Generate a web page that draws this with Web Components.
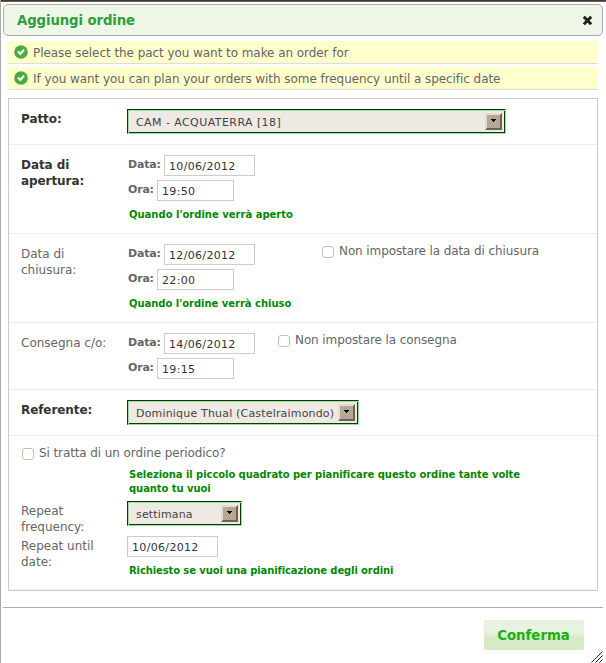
<!DOCTYPE html>
<html lang="it"><head><meta charset="utf-8"><title>Aggiungi ordine</title>
<style>html,body{margin:0;height:100%;overflow:hidden;background:#fff}body{font:12px/16px "DejaVu Sans",sans-serif;color:#666}</style>
</head><body>
<order-dialog>
<span slot="title">Aggiungi ordine</span>
<info-message>Please select the pact you want to make an order for</info-message>
<info-message>If you want you can plan your orders with some frequency until a specific date</info-message>
<form-panel>
<form-row label="Patto:" required style="height:46px"><select-box style="width:379px;margin-top:-2px;letter-spacing:.43px">CAM - ACQUATERRA [18]</select-box></form-row>
<form-row label="Data di apertura:" required style="height:89px"><date-time date="10/06/2012" time="19:50"></date-time><hint-text>Quando l'ordine verrà aperto</hint-text></form-row>
<form-row label="Data di chiusura:" style="height:89px"><date-time date="12/06/2012" time="22:00"><check-box style="margin-left:63px">Non impostare la data di chiusura</check-box></date-time><hint-text style="letter-spacing:-.03px">Quando l'ordine verrà chiuso</hint-text></form-row>
<form-row label="Consegna c/o:" style="height:67px"><date-time date="14/06/2012" time="19:15"><check-box style="margin-left:19px">Non impostare la consegna</check-box></date-time></form-row>
<form-row label="Referente:" required style="height:46px"><select-box style="width:232px;margin-top:-2px;letter-spacing:.18px">Dominique Thual (Castelraimondo)</select-box></form-row>
<periodic-section></periodic-section>
</form-panel>
<action-button slot="actions">Conferma</action-button>
</order-dialog>
<script>
const define=(name,css,html)=>customElements.define(name,class extends HTMLElement{
constructor(){super();this.attachShadow({mode:'open'}).innerHTML=`<style>*{box-sizing:border-box}:host{display:block;box-sizing:border-box}${css}</style>`+(typeof html==='function'?html(this):html)}});

define('info-message',`:host{height:23px;background:#ffc;border-bottom:1px solid #ddd;margin-bottom:3px;padding:4px 0 0 6px;display:flex;align-items:flex-start;white-space:nowrap;letter-spacing:-.06px}svg{margin-right:5px;flex:none}`,
`<svg width="14" height="14" viewBox="0 0 14 14"><circle cx="7" cy="7" r="6.8" fill="#4aab3f"/><path d="M4 6.6 6.3 8.9 10 4.8" fill="none" stroke="#fff" stroke-width="2.1"/></svg><slot></slot>`);
define('form-panel',`:host{border:1px solid #ccc;margin-top:8px;height:493px}`,`<slot></slot>`);
define('form-row',`:host{display:grid;grid-template-columns:106px 1fr;padding:12px 0 0 12px;border-bottom:1px solid #eee}label{width:92px}:host([required]) label{font-weight:bold;color:#333;letter-spacing:-.08px}`,
el=>`<label>${el.getAttribute('label')}</label><div><slot></slot></div>`);
define('select-box',`:host{display:flex;height:25px;background:#eee9e2;border:1px solid #004000;border-right-color:#9fd89f;border-bottom-color:#9fd89f;box-shadow:inset 1px 1px #9fd89f,inset -1px -1px #004000;padding:3px 3px 3px 8px;font-size:11px;color:#444;justify-content:space-between;white-space:nowrap;line-height:19px}i{width:17px;height:17px;background:#b5a793;border:2px solid;border-color:#e2dcd3 #6b6154 #6b6154 #e2dcd3;display:block}svg{display:block;margin:4px 0 0 4px}`,
`<span><slot></slot></span><i><svg width="5" height="3"><path d="M0 0H5V1H4V2H3V3H2V2H1V1H0Z" fill="#000"/></svg></i>`);
define('text-field',`:host{display:inline-block;height:21px;width:91px;border:1px solid #ccc;background:#fff;color:#333;font-size:11px;line-height:21px;padding-left:4px;letter-spacing:.33px}`,`<slot></slot>`);
define('date-time',`.r{display:flex;height:25px;gap:4px;padding-left:1px}b{font-size:11px;line-height:20px;width:32px;white-space:nowrap;letter-spacing:-.2px}.t{width:77px}b.o{width:25px}.d{margin-top:-2px}::slotted(check-box){margin-top:-1px}`,
el=>`<div class="r d"><b>Data:</b><text-field>${el.getAttribute('date')}</text-field><slot></slot></div><div class="r"><b class="o">Ora:</b><text-field class="t">${el.getAttribute('time')}</text-field></div>`);
define('hint-text',`:host{font-size:10px;font-weight:bold;color:#080;line-height:14px;padding:3px 0 0 2px}`,`<slot></slot>`);
define('check-box',`:host{display:flex;gap:5px;white-space:nowrap;letter-spacing:-.1px}i{width:12px;height:12px;border:1px solid #c9bda9;border-radius:3px;margin-top:3px;background:#fff}`,`<i></i><span><slot></slot></span>`);
define('periodic-section',`:host{height:154px;border-bottom:1px solid #eee;padding:9px 0 0 12px}.g{display:grid;grid-template-columns:106px 1fr}.g label{width:85px}`,
`<check-box style="margin-left:1px">Si tratta di un ordine periodico?</check-box>
<hint-text style="margin:4px 0 0 106px;width:410px;letter-spacing:-.07px">Seleziona il piccolo quadrato per pianificare questo ordine tante volte quanto tu vuoi</hint-text>
<div class="g" style="margin-top:5px;height:35px"><label style="padding-top:2px">Repeat frequency:</label><select-box style="width:115px;letter-spacing:.15px">settimana</select-box></div>
<div class="g"><label style="padding-top:2px">Repeat until date:</label><div><text-field style="vertical-align:top">10/06/2012</text-field><hint-text style="padding-top:7px;letter-spacing:-.11px">Richiesto se vuoi una pianificazione degli ordini</hint-text></div></div>`);
define('action-button',`:host{width:100px;height:30px;padding-right:1px;text-align:center;font-weight:bold;font-size:13.3px;line-height:31px;color:#1bb00f;border-radius:2px;background:linear-gradient(#e7f3e0 0,#e7f3e0 40%,#d5eac5 60%,#d5eac5)}`,`<slot></slot>`);
define('order-dialog',`:host{position:relative;height:663px;border-left:1px solid #aaa;padding:4px 3px 0 2px;background:linear-gradient(#40352f 1px,#6b5e52 1px,#6b5e52 2px,#fff 2px)}
header{height:32px;border:1px solid #aaa;border-radius:5px;background:#eef6e8;display:flex;justify-content:space-between;padding:8px 9px 0 13px;font-weight:bold;font-size:13.3px;letter-spacing:-.12px;color:#2e9e3c}
main{padding:5px 5px 0}footer{border-top:1px solid #aaa;margin-top:16px;padding:12px 19px 0;display:flex;justify-content:flex-end}.z{position:absolute;right:3px;bottom:0}header svg{margin-top:2px}`,
`<header><slot name="title"></slot><svg width="11" height="11"><path d="M1.8 1.8 9.2 9.2M9.2 1.8 1.8 9.2" stroke="#222" stroke-width="3"/></svg></header><main><slot></slot></main><footer><slot name="actions"></slot></footer><svg class="z" width="12" height="12"><path d="M.5 11.5 11.5 .5M4.5 11.5 11.5 4.5M8.5 11.5 11.5 8.5" stroke="#222" stroke-width="1"/></svg>`);
</script></body></html>
